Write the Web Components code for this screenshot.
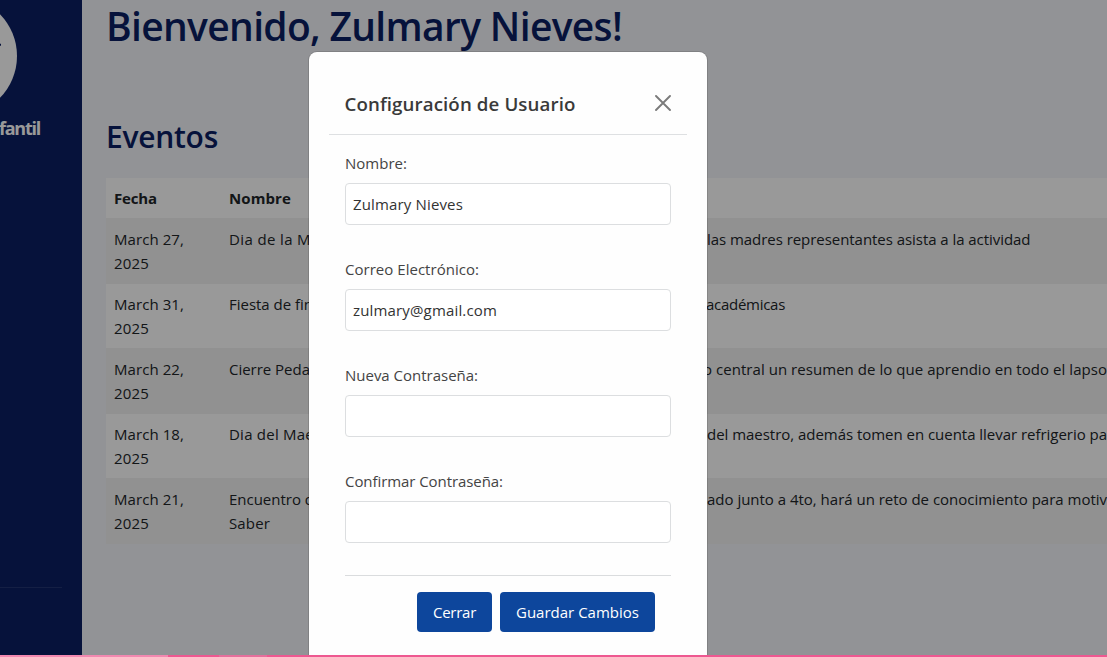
<!DOCTYPE html>
<html lang="es">
<head>
<meta charset="utf-8">
<title>Panel de eventos</title>
<style>
html,body{margin:0;height:100%;overflow:hidden;font-family:"Open Sans","Noto Sans",sans-serif;font-size:15px;line-height:24px;color:#212529}
</style>
</head>
<body>
<school-app></school-app>
<script>
function define(name, html, setup) {
  const t = document.createElement('template');
  t.innerHTML = html;
  customElements.define(name, class extends HTMLElement {
    constructor() {
      super();
      this.attachShadow({mode: 'open'}).append(t.content.cloneNode(true));
    }
    connectedCallback() { if (setup) setup(this, this.shadowRoot); }
  });
}

// A single line of text whose tracking is tuned to a given advance width.
define('fit-text', `<style>:host{display:inline-block;white-space:pre;vertical-align:top}span{display:inline-block}</style><span><slot></slot></span>`, (el, root) => {
  const s = root.querySelector('span');
  const w = +el.getAttribute('w'), n = el.textContent.length;
  s.style.letterSpacing = ((w - s.getBoundingClientRect().width) / n) + 'px';
});

define('side-bar', `<style>
:host{display:block;flex:none;box-sizing:border-box;width:250px;margin-left:-168px;height:657px;padding:0 20px;background:#0a1e63;color:#fff}
.col{display:flex;flex-direction:column;height:100%}
svg{display:block;width:120px;height:120px;margin:-4px auto 0}
.name{height:24px;margin:0 22px 0 0;text-align:right;font-weight:700;font-size:18px}
hr{width:100%;border:0;border-top:1px solid rgba(255,255,255,.1);margin:447px 0 0}
</style>
<div class="col">
<svg viewBox="0 0 120 120"><circle cx="60" cy="60" r="60" fill="#fff"/><path d="M100 49l4-1.5v2l-4 1.5z" fill="#0a1e63"/></svg>
<div class="name"><fit-text w="41">fantil</fit-text></div>
<hr></div>`);

define('event-row', `<style>
:host{display:grid;grid-template-columns:115px 478px 1fr;box-sizing:border-box;height:65px;padding:9px 0 0 8px;background:#fff;white-space:nowrap}
:host([striped]){background:#f2f2f2}
:host([head]){height:40px;padding-top:8px;font-weight:700}
::slotted(*){display:block}
</style><slot name="date"></slot><slot name="name"></slot><slot name="info"></slot>`);

define('events-table', `<style>:host{display:block;width:1010px}
div{min-width:0}event-row div fit-text{display:block}</style>
<event-row head><div slot="date"><fit-text w="43">Fecha</fit-text></div><div slot="name"><fit-text w="62">Nombre</fit-text></div></event-row>
<event-row striped style="height:66px"><div slot="date"><fit-text w="70">March 27,</fit-text><fit-text w="35">2025</fit-text></div><div slot="name"><fit-text w="82">Dia de la M</fit-text></div><div slot="info"><fit-text w="323.5">las madres representantes asista a la actividad</fit-text></div></event-row>
<event-row style="height:64px;padding-top:8px"><div slot="date"><fit-text w="70">March 31,</fit-text><fit-text w="35">2025</fit-text></div><div slot="name"><fit-text w="84">Fiesta de fin</fit-text></div><div slot="info" style="margin-left:-1px"><fit-text w="79">académicas</fit-text></div></event-row>
<event-row striped style="height:66px"><div slot="date"><fit-text w="70">March 22,</fit-text><fit-text w="35">2025</fit-text></div><div slot="name"><fit-text w="81">Cierre Peda</fit-text></div><div slot="info" style="margin-left:-4px"><fit-text w="404">o central un resumen de lo que aprendio en todo el lapso</fit-text></div></event-row>
<event-row style="height:64px;padding-top:8px"><div slot="date"><fit-text w="70">March 18,</fit-text><fit-text w="35">2025</fit-text></div><div slot="name"><fit-text w="85">Dia del Mae</fit-text></div><div slot="info"><fit-text w="400">del maestro, además tomen en cuenta llevar refrigerio pa</fit-text></div></event-row>
<event-row striped style="height:66px"><div slot="date"><fit-text w="70">March 21,</fit-text><fit-text w="35">2025</fit-text></div><div slot="name"><fit-text w="85">Encuentro d</fit-text><fit-text w="41">Saber</fit-text></div><div slot="info"><fit-text w="400">ado junto a 4to, hará un reto de conocimiento para motiv</fit-text></div></event-row>`);

define('main-content', `<style>
:host{display:block;flex:1;min-width:0;padding-left:24px;overflow:hidden}
h1,h2{margin:0;font-weight:600;color:#0a1e63}
h1{font-size:39px;line-height:48px;margin-top:2px}
h2{font-size:30px;line-height:38px;margin:68px 0 22px}
h1 fit-text,h2 fit-text{display:block}
</style>
<h1><fit-text w="516">Bienvenido, Zulmary Nieves!</fit-text></h1>
<h2><fit-text w="112">Eventos</fit-text></h2>
<events-table></events-table>`);

define('form-field', `<style>
:host{display:block;height:106px;color:#444}
.box{box-sizing:border-box;height:42px;margin-top:8px;padding:8px 7px;border:1px solid #dcdee0;border-radius:4px;background:#fff;color:#333}
</style><slot name="label"></slot><div class="box"><slot></slot></div>`);

define('action-button', `<style>
:host{display:flex;justify-content:center;align-items:center;height:40px;border-radius:4px;background:#0d469c;color:#fff;font-size:15px}
</style><slot></slot>`);

define('user-dialog', `<style>
:host{display:block;position:absolute;left:309px;top:52px;box-sizing:border-box;width:398px;height:640px;padding:20px;border-radius:8px;background:#fefefe;box-shadow:0 0 0 1px rgba(0,0,0,.12)}
header{display:flex;justify-content:space-between;align-items:center;box-sizing:border-box;height:63px;padding:0 16px;border-bottom:1px solid #dee0e2;font-size:18.7px;font-weight:600;color:#3a3a3a}
header fit-text{margin:2px 0 0 -.5px}
svg{display:block;width:16px;height:16px;margin-top:-1px}
.body{padding:16px 16px 0}
footer{display:flex;justify-content:flex-end;gap:8px;border-top:1px solid #dadcde;padding:16px 16px 0;}
.c{width:75px}.g{width:155px}
</style>
<header><fit-text w="231">Configuración de Usuario</fit-text>
<svg viewBox="0 0 16 16" fill="none" stroke="#7b7b7b" stroke-width="1.9" stroke-linecap="round"><path d="M1 1l14 14M15 1L1 15"/></svg></header>
<div class="body">
<form-field><fit-text slot="label" w="62">Nombre:</fit-text><fit-text w="110">Zulmary Nieves</fit-text></form-field>
<form-field><fit-text slot="label" w="134">Correo Electrónico:</fit-text><fit-text w="144">zulmary@gmail.com</fit-text></form-field>
<form-field><fit-text slot="label" w="133">Nueva Contraseña:</fit-text></form-field>
<form-field><fit-text slot="label" w="158">Confirmar Contraseña:</fit-text></form-field>
<footer><action-button class="c"><fit-text w="43">Cerrar</fit-text></action-button><action-button class="g"><fit-text w="123">Guardar Cambios</fit-text></action-button></footer>
</div>`);

define('progress-strip', `<style>
:host{position:absolute;left:0;right:0;bottom:0;height:2px;display:flex;background:#ee5891}
i{display:block;height:100%}.a{width:168px;background:#f288b0}.b{width:51px}.c{width:48px;background:#e56f9c}
</style><i class="a"></i><i class="b"></i><i class="c"></i>`);

define('school-app', `<style>
:host{display:flex;position:relative;width:1107px;height:657px;overflow:hidden;background:#f4f6fb}
.backdrop{position:absolute;inset:0;background:rgba(0,0,0,.4)}
</style>
<side-bar></side-bar><main-content></main-content>
<div class="backdrop"></div><user-dialog></user-dialog><progress-strip></progress-strip>`);
</script>
</body>
</html>
